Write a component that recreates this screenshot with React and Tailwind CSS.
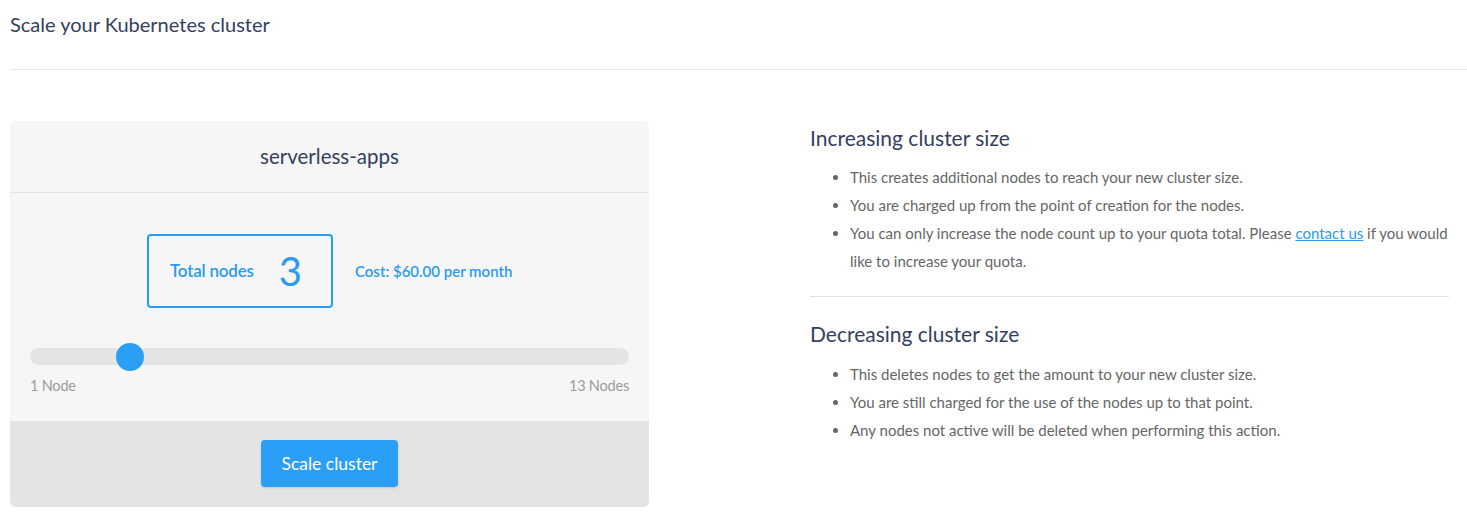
import { useState } from 'react';

const increasing = [
  'This creates additional nodes to reach your new cluster size.',
  'You are charged up from the point of creation for the nodes.',
];

const decreasing = [
  'This deletes nodes to get the amount to your new cluster size.',
  'You are still charged for the use of the nodes up to that point.',
  'Any nodes not active will be deleted when performing this action.',
];

const ScaleCluster = () => {
  const [nodes] = useState(3);
  const min = 1;
  const max = 13;
  const pct = ((nodes - min) / (max - min)) * 100;

  return (
    <div className="bg-white min-h-screen pl-[10px]" style={{ fontFamily: 'Lato, "Open Sans", sans-serif' }}>
      <h1 className="pt-[9px] h-[70px] text-[20px] text-[#34405e] border-b border-[#e6e6e6]">
        Scale your Kubernetes cluster
      </h1>

      <div className="flex mt-[51px]">
        <div className="w-[639px] bg-[#f6f6f6] rounded-md overflow-hidden">
          <div className="h-[72px] flex items-center justify-center border-b border-[#e2e2e2] text-[20.5px] text-[#34405e]">
            serverless-apps
          </div>

          <div className="px-5 pt-[41px] pb-[24px]">
            <div className="flex items-center pl-[117px] gap-[22px]">
              <div className="w-[186px] h-[74px] border-2 border-[#2b9af3] rounded-[4px] flex items-center pl-[21px] gap-[25px]">
                <span className="text-[17px] font-semibold text-[#2b9af3] tracking-[-0.2px]">Total nodes</span>
                <span className="text-[40px] text-[#2b9af3] leading-none">{nodes}</span>
              </div>
              <span className="text-[15px] font-semibold text-[#2b9af3]">Cost: $60.00 per month</span>
            </div>

            <div className="relative mt-[40px] h-[17px] rounded-full bg-[#e4e4e4]">
              <div
                className="absolute top-1/2 w-7 h-7 rounded-full bg-[#2b9ff6] -translate-y-1/2 -translate-x-1/2"
                style={{ left: `${pct}%` }}
              />
            </div>
            <div className="flex justify-between mt-[10px] text-[14.5px] text-[#9b9b9b] tracking-[-0.2px]">
              <span>1 Node</span>
              <span>13 Nodes</span>
            </div>
          </div>

          <div className="bg-[#e4e4e4] h-[86px] flex items-center justify-center">
            <button className="w-[137px] h-[47px] rounded-[4px] bg-[#2b9ff6] text-white text-[17.5px] shadow-sm">
              Scale cluster
            </button>
          </div>
        </div>

        <div className="w-[639px] ml-[161px] pt-[1px]">
          <h2 className="text-[21px] text-[#34405e]">Increasing cluster size</h2>
          <ul className="mt-[9px] pl-[40px] mr-[-8px] list-disc text-[15px] leading-[28px] text-[#666]">
            {increasing.map((t) => (
              <li key={t}>{t}</li>
            ))}
            <li>
              You can only increase the node count up to your quota total. Please{' '}
              <a href="#" className="text-[#2b9af3] underline">contact us</a> if you would like to increase your quota.
            </li>
          </ul>
          <div className="border-t border-[#e2e2e2] mt-[21px]" />
          <h2 className="mt-[21px] text-[21px] text-[#34405e]">Decreasing cluster size</h2>
          <ul className="mt-[11px] pl-[40px] list-disc text-[15px] leading-[28px] text-[#666]">
            {decreasing.map((t) => (
              <li key={t}>{t}</li>
            ))}
          </ul>
        </div>
      </div>
    </div>
  );
};

export default function App() {
  return <ScaleCluster />;
}
